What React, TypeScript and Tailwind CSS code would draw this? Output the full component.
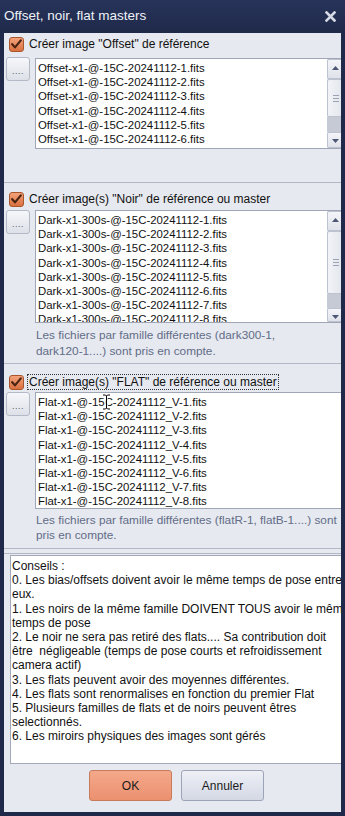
import React from "react";

const FONT = "font-['Liberation_Sans',Arial,sans-serif]";

function CheckBox() {
  return (
    <div className="w-[15px] h-[15px] rounded-[3px] border border-[#a9552c] bg-gradient-to-b from-[#f4a27a] to-[#d9703f] flex items-center justify-center shrink-0">
      <svg width="11" height="10" viewBox="0 0 11 10">
        <path d="M1.2 5.2 L4 8.4 L9.8 1.4" fill="none" stroke="#4a2412" strokeWidth="2.2" strokeLinecap="round" strokeLinejoin="round" />
      </svg>
    </div>
  );
}

function DotsButton() {
  return (
    <div className="w-[24px] h-[24px] shrink-0 rounded-[3px] border border-[#b3b9c7] bg-gradient-to-b from-[#f6f7fa] to-[#dde0e8] flex items-center justify-center pt-[5px]">
      <span className="text-[9px] leading-none text-[#555b68] tracking-[0.5px]">....</span>
    </div>
  );
}

function Scrollbar({ thumb, track }: { thumb: string; track: string }) {
  return (
    <div className="w-[17px] shrink-0 flex flex-col bg-[#e1e4eb]">
      <div className="h-[20px] shrink-0 rounded-[2px] border border-[#bcc2ce] bg-gradient-to-b from-[#f3f5f9] to-[#dfe2ea] flex items-start justify-center pt-[6px]">
        <svg width="7" height="4" viewBox="0 0 7 4">
          <path d="M0 4 L3.5 0 L7 4Z" fill="#4d5775" />
        </svg>
      </div>
      <div className={`${thumb} shrink-0 rounded-[2px] border border-[#bcc2ce] bg-gradient-to-r from-[#f1f3f7] to-[#e2e5ec] flex flex-col items-center justify-center gap-[2px]`}>
        <div className="w-[6px] h-px bg-[#9aa1b2]" />
        <div className="w-[6px] h-px bg-[#9aa1b2]" />
        <div className="w-[6px] h-px bg-[#9aa1b2]" />
      </div>
      <div className={`${track} shrink-0 bg-[#c6cad5]`} />
      <div className="flex-1 rounded-[2px] border border-[#bcc2ce] bg-gradient-to-b from-[#f3f5f9] to-[#dfe2ea] flex items-start justify-center pt-[6px]">
        <svg width="7" height="4" viewBox="0 0 7 4">
          <path d="M0 0 L3.5 4 L7 0Z" fill="#4d5775" />
        </svg>
      </div>
    </div>
  );
}

function FileList({ items }: { items: string[] }) {
  return (
    <div className="flex-1 min-w-0 overflow-hidden pt-[2px] pl-[2px]">
      {items.map((t) => (
        <div key={t} className="text-[11.4px] leading-[14.2px] text-[#111] whitespace-nowrap">
          {t}
        </div>
      ))}
    </div>
  );
}

const offsets = Array.from({ length: 7 }, (_, i) => `Offset-x1-@-15C-20241112-${i + 1}.fits`);
const darks = Array.from({ length: 8 }, (_, i) => `Dark-x1-300s-@-15C-20241112-${i + 1}.fits`);
const flats = Array.from({ length: 8 }, (_, i) => `Flat-x1-@-15C-20241112_V-${i + 1}.fits`);

const advice = [
  "Conseils :",
  "0. Les bias/offsets doivent avoir le même temps de pose entre",
  "eux.",
  "1. Les noirs de la même famille DOIVENT TOUS avoir le même",
  "temps de pose",
  "2. Le noir ne sera pas retiré des flats.... Sa contribution doit",
  "être  négligeable (temps de pose courts et refroidissement",
  "camera actif)",
  "3. Les flats peuvent avoir des moyennes différentes.",
  "4. Les flats sont renormalises en fonction du premier Flat",
  "5. Plusieurs familles de flats et de noirs peuvent êtres",
  "selectionnés.",
  "6. Les miroirs physiques des images sont gérés",
];

function Label({ text, focus }: { text: string; focus?: boolean }) {
  return (
    <div
      className={`ml-[3px] px-[1px] h-[16px] flex items-center text-[12px] text-[#111] whitespace-nowrap border ${
        focus ? "border-dotted border-[#333]" : "border-transparent"
      }`}
    >
      {text}
    </div>
  );
}

export default function App() {
  return (
    <div className={`w-[345px] h-[816px] bg-[#1f2a4a] flex flex-col overflow-hidden ${FONT}`}>
      {/* Title bar */}
      <div className="h-[33px] shrink-0 flex items-center justify-between pl-[4px] pr-[9px] bg-gradient-to-b from-[#27335a] to-[#1f2a4a]">
        <span className="text-[13.5px] text-[#eef1f7] whitespace-nowrap">Offset, noir, flat masters</span>
        <svg width="11" height="11" viewBox="0 0 11 11">
          <path d="M1.5 1.5 L9.5 9.5 M9.5 1.5 L1.5 9.5" stroke="#d6dae5" strokeWidth="2.6" strokeLinecap="square" />
        </svg>
      </div>

      {/* Content */}
      <div className="mx-[4px] h-[779px] shrink-0 bg-[#e6e9ef] overflow-hidden flex flex-col">
        {/* Section 1 */}
        <div className="h-[150px] shrink-0 border-b border-[#b1b7c4] pt-[3px]">
          <div className="h-[16px] flex items-center pl-[5px]">
            <CheckBox />
            <Label text={'Créer image "Offset" de référence'} />
          </div>
          <div className="flex mt-[5px] pl-[2px]">
            <DotsButton />
            <div className="ml-[5px] mt-[1px] w-[310px] shrink-0 h-[91px] bg-white border border-[#9fa6b6] flex">
              <FileList items={offsets} />
              <Scrollbar thumb="h-[38px]" track="h-[15px]" />
            </div>
          </div>
        </div>

        {/* Section 2 */}
        <div className="h-[181px] shrink-0 border-b border-[#b1b7c4] pt-[8px]">
          <div className="h-[16px] flex items-center pl-[5px]">
            <CheckBox />
            <Label text={'Créer image(s) "Noir" de référence ou master'} />
          </div>
          <div className="flex mt-[3px] pl-[2px]">
            <DotsButton />
            <div className="ml-[5px] w-[310px] shrink-0 h-[113px] bg-white border border-[#9fa6b6] flex">
              <FileList items={darks} />
              <Scrollbar thumb="h-[63px]" track="h-[14px]" />
            </div>
          </div>
          <div className="mt-[5px] pl-[32px] text-[11.8px] leading-[15.5px] text-[#626c88] whitespace-nowrap">
            <div>Les fichiers par famille différentes (dark300-1,</div>
            <div>dark120-1....) sont pris en compte.</div>
          </div>
        </div>

        {/* Section 3 */}
        <div className="h-[185px] shrink-0 border-b border-[#b1b7c4] pt-[10px]">
          <div className="h-[16px] flex items-center pl-[5px]">
            <CheckBox />
            <Label text={'Créer image(s) "FLAT" de référence ou master'} focus />
          </div>
          <div className="flex mt-[2px] pl-[2px]">
            <DotsButton />
            <div className="relative ml-[5px] w-[310px] shrink-0 h-[117px] bg-white border border-[#9fa6b6] flex">
              <FileList items={flats} />
              <svg className="absolute left-[66px] top-[1px]" width="9" height="16" viewBox="0 0 9 16">
                <path
                  d="M1 1 H3.5 L4.5 2 L5.5 1 H8 M4.5 2 V14 M1 15 H3.5 L4.5 14 L5.5 15 H8"
                  fill="none"
                  stroke="#ffffff"
                  strokeWidth="2.4"
                />
                <path
                  d="M1 1 H3.5 L4.5 2 L5.5 1 H8 M4.5 2 V14 M1 15 H3.5 L4.5 14 L5.5 15 H8"
                  fill="none"
                  stroke="#000000"
                  strokeWidth="1"
                />
              </svg>
            </div>
          </div>
          <div className="mt-[4px] pl-[32px] text-[11.8px] leading-[14.5px] text-[#626c88] whitespace-nowrap">
            <div>Les fichiers par famille différentes (flatR-1, flatB-1....) sont</div>
            <div>pris en compte.</div>
          </div>
        </div>

        <div className="h-[4px] shrink-0" />

        {/* Advice panel */}
        <div className="flex-1 border-t border-[#b1b7c4] pt-[1px] flex flex-col">
          <div className="ml-[6px] w-[340px] shrink-0 h-[209px] bg-white border border-[#a3a9b8] pt-[3px] pl-[1px] overflow-hidden">
            {advice.map((t, i) => (
              <div key={i} className="text-[12px] leading-[14.2px] text-[#111] whitespace-pre">
                {t}
              </div>
            ))}
          </div>
          <div className="flex gap-[9px] pl-[85px] mt-[6px]">
            <div className="w-[83px] h-[31px] rounded-[3px] border border-[#c77a5c] bg-gradient-to-b from-[#f4a88a] to-[#eb9170] flex items-center justify-center text-[12px] text-[#1a1a1a]">
              OK
            </div>
            <div className="w-[83px] h-[31px] rounded-[3px] border border-[#9da4b8] bg-gradient-to-b from-[#eef0f6] to-[#d3d8e4] flex items-center justify-center text-[12px] text-[#1a1a1a]">
              Annuler
            </div>
          </div>
        </div>
      </div>
    </div>
  );
}
